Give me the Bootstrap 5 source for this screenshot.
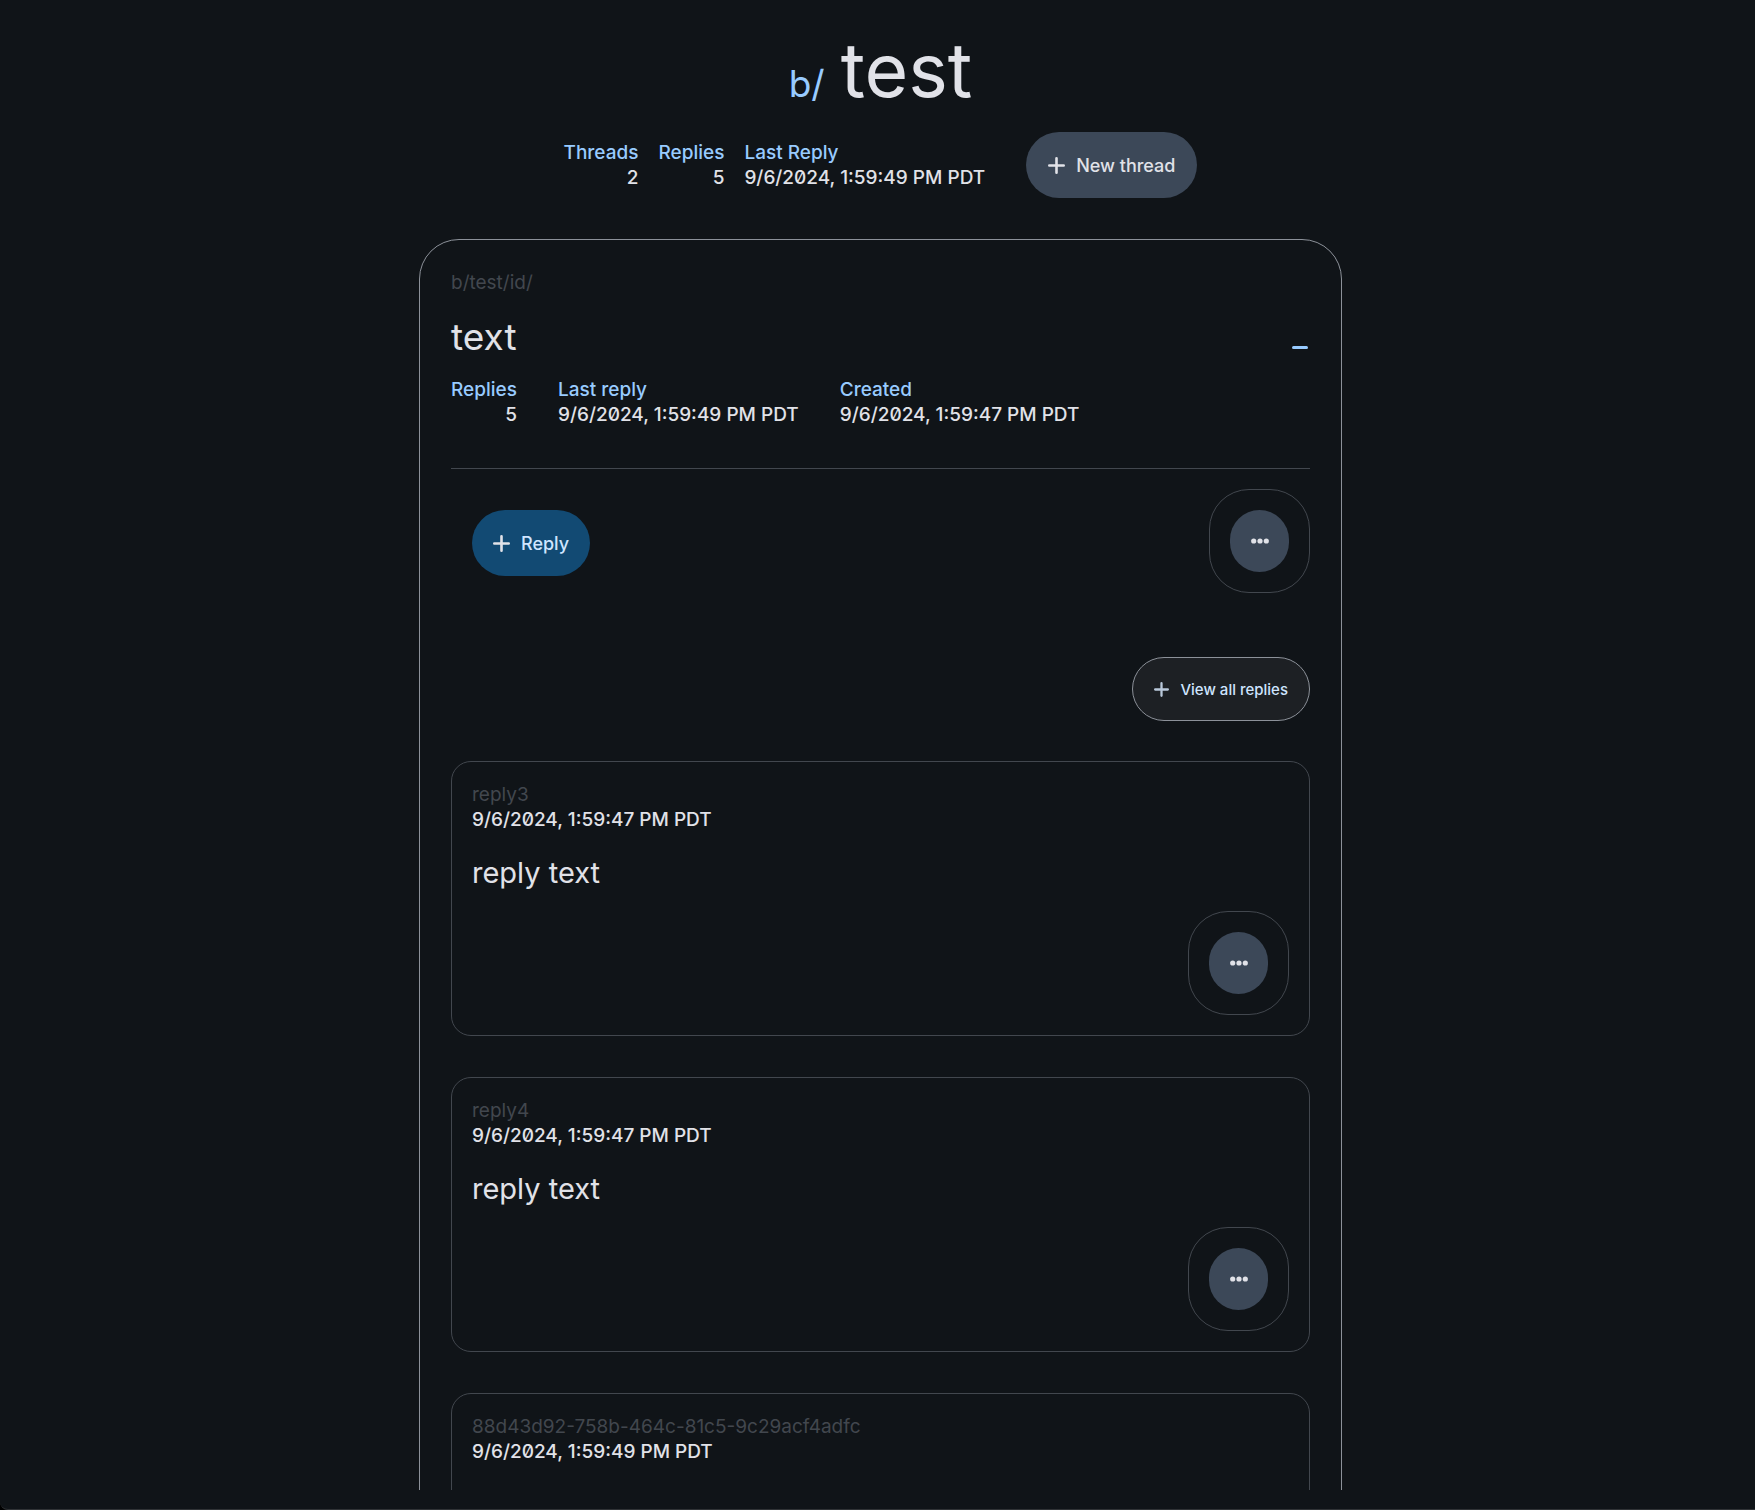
<!DOCTYPE html>
<html lang="en" data-bs-theme="dark">
<head>
<meta charset="utf-8">
<meta name="viewport" content="width=device-width, initial-scale=1">
<title>b/test</title>
<link href="https://cdn.jsdelivr.net/npm/bootstrap@5.3.0/dist/css/bootstrap.min.css" rel="stylesheet">
<script src="https://cdn.jsdelivr.net/npm/bootstrap@5.3.0/dist/js/bootstrap.bundle.min.js"></script>
<style>
:root { --surface:#101418; --on-surface:#e1e2e8; --primary:#98cbff; --outline:#8c9199; --outline-dim:#42474e; }
html { background:#000; }
body { height:100vh; background:transparent; color:var(--on-surface); font:500 19px/25px Inter,"Noto Sans",sans-serif; font-feature-settings:"zero"; }
.window { height:100%; background:var(--surface); border-bottom:1px solid #303336; border-radius:0 0 0 8px; padding-bottom:19px; }
.scroller { overflow-y:auto; scrollbar-width:none; padding:25px 0 0 6px; }
.scroller::-webkit-scrollbar { display:none; }
.board-title { color:var(--on-surface); font-size:75px; line-height:90px; font-weight:400; gap:16px; margin-bottom:17px; }
.board-title a { font-size:37px; line-height:44px; font-weight:400; }
.label { color:var(--primary); font-weight:500; }
.stats { gap:20px; }
.stats.wide, .board-bar { gap:41px; }
.stats dd { margin:0; }
.muted-id { color:var(--outline-dim); font-weight:400; }
.thread { max-width:923px; margin:41px auto 40px; border:1px solid var(--outline); border-radius:40px; padding:30px 31px; }
.thread-title { color:var(--on-surface); font-size:37px; line-height:44px; font-weight:400; margin:0; }
.thread-head { margin:20px 0 18px; }
.rule { border-top:1px solid var(--outline-dim); margin:41px 0 20px; opacity:1; }
.pill { --bs-btn-padding-x:21px; --bs-btn-padding-y:0; --bs-btn-border-width:0; --bs-btn-border-radius:33px; --bs-btn-font-size:18px; --bs-btn-font-weight:500; --bs-btn-line-height:25px; height:66px; gap:11px; }
.pill-tonal { --bs-btn-padding-x:22px; --bs-btn-color:#e1e2e8; --bs-btn-bg:#3c4858; --bs-btn-hover-color:#fff; --bs-btn-hover-bg:#485567; }
.pill-primary { --bs-btn-color:#cfe5ff; --bs-btn-bg:#124a73; --bs-btn-hover-color:#fff; --bs-btn-hover-bg:#1b5a88; margin:21px; }
.pill-primary svg { color:var(--on-surface); }
.pill-outline { --bs-btn-color:#cfe5ff; --bs-btn-bg:#1d2024; --bs-btn-border-color:#8c9199; --bs-btn-border-width:1px; --bs-btn-font-size:15px; --bs-btn-hover-color:#fff; --bs-btn-hover-bg:#272a2f; height:64px; margin:64px 0 40px; }
.pill-outline svg { color:#b9c8da; }
.menu { border:1px solid var(--outline-dim); border-radius:40px; padding:20px; }
.dots { --bs-btn-padding-x:0; --bs-btn-padding-y:0; --bs-btn-border-width:0; --bs-btn-border-radius:30px; width:59px; height:62px; }
.reply { border:1px solid var(--outline-dim); border-radius:20px; padding:20px; margin-bottom:41px; }
.reply p { font-size:29px; line-height:34px; font-weight:400; margin:24px 0 21px; }
.reply-pending { min-height:275px; }
</style>
</head>
<body>
<svg class="d-none">
  <symbol id="plus" viewBox="0 0 17 17"><path d="M8.500 1.300V15.700M1.300 8.500H15.700" fill="none" stroke="currentColor" stroke-width="2.600" stroke-linecap="round"/></symbol>
  <symbol id="ellipsis" viewBox="0 0 18 6"><g fill="currentColor"><circle cx="2.700" cy="3" r="2.600"/><circle cx="9" cy="3" r="2.600"/><circle cx="15.300" cy="3" r="2.600"/></g></symbol>
</svg>
<div class="window d-flex flex-column">
<main class="scroller flex-grow-1">
  <header>
    <h1 class="board-title d-flex justify-content-center align-items-baseline"><a class="label text-decoration-none" href="#">b/</a>test</h1>
    <div class="board-bar d-flex flex-wrap justify-content-center align-items-center">
      <dl class="stats d-flex mb-0">
        <div class="text-end"><dt class="label">Threads</dt><dd>2</dd></div>
        <div class="text-end"><dt class="label">Replies</dt><dd>5</dd></div>
        <div><dt class="label">Last Reply</dt><dd>9/6/2024, 1:59:49 PM PDT</dd></div>
      </dl>
      <button type="button" class="btn pill pill-tonal d-inline-flex align-items-center"><svg width="17" height="17"><use href="#plus"/></svg>New thread</button>
    </div>
  </header>

  <article class="thread">
    <div class="muted-id">b/test/id/</div>
    <div class="thread-head d-flex justify-content-between align-items-end">
      <h2 class="thread-title">text</h2>
      <button type="button" class="btn border-0 p-0 d-flex" aria-label="Collapse thread"><svg width="18" height="24" viewBox="0 0 18 24"><path d="M1.500 12.500H14.500" stroke="#98cbff" stroke-width="3" stroke-linecap="round"/></svg></button>
    </div>
    <dl class="stats wide d-flex flex-wrap mb-0">
      <div class="text-end"><dt class="label">Replies</dt><dd>5</dd></div>
      <div><dt class="label">Last reply</dt><dd>9/6/2024, 1:59:49 PM PDT</dd></div>
      <div><dt class="label">Created</dt><dd>9/6/2024, 1:59:47 PM PDT</dd></div>
    </dl>
    <hr class="rule">
    <div class="d-flex justify-content-between align-items-start">
      <button type="button" class="btn pill pill-primary d-inline-flex align-items-center mb-0"><svg width="17" height="17"><use href="#plus"/></svg>Reply</button>
      <div class="menu"><button type="button" class="btn dots pill-tonal d-flex align-items-center justify-content-center p-0" aria-label="Thread options"><svg width="18" height="6"><use href="#ellipsis"/></svg></button></div>
    </div>
    <div class="d-flex justify-content-end">
      <button type="button" class="btn pill pill-outline d-inline-flex align-items-center"><svg width="15" height="15"><use href="#plus"/></svg>View all replies</button>
    </div>

    <section class="reply">
      <div class="muted-id">reply3</div>
      <time class="d-block">9/6/2024, 1:59:47 PM PDT</time>
      <p>reply text</p>
      <div class="d-flex justify-content-end"><div class="menu"><button type="button" class="btn dots pill-tonal d-flex align-items-center justify-content-center p-0" aria-label="Reply options"><svg width="18" height="6"><use href="#ellipsis"/></svg></button></div></div>
    </section>
    <section class="reply">
      <div class="muted-id">reply4</div>
      <time class="d-block">9/6/2024, 1:59:47 PM PDT</time>
      <p>reply text</p>
      <div class="d-flex justify-content-end"><div class="menu"><button type="button" class="btn dots pill-tonal d-flex align-items-center justify-content-center p-0" aria-label="Reply options"><svg width="18" height="6"><use href="#ellipsis"/></svg></button></div></div>
    </section>
    <section class="reply reply-pending">
      <div class="muted-id">88d43d92-758b-464c-81c5-9c29acf4adfc</div>
      <time class="d-block">9/6/2024, 1:59:49 PM PDT</time>
    </section>
  </article>
</main>
</div>
</body>
</html>
